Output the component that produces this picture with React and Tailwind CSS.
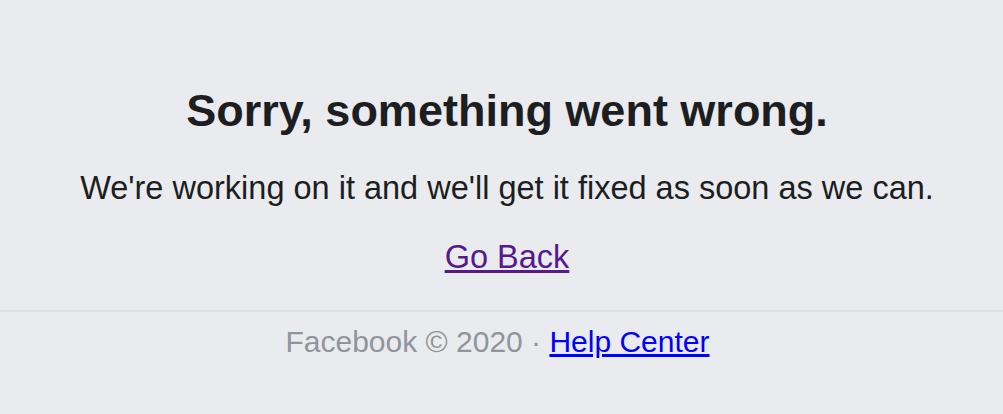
export default function App() {
  return (
    <div className="min-h-screen w-full bg-[#e9ebee] font-['Liberation_Sans',Arial,sans-serif] text-center">
      <div className="pt-[85px] pb-[35px] pl-[11px]">
        <h1 className="text-[45px] leading-[52px] font-bold text-[#1c1e21]">
          Sorry, something went wrong.
        </h1>
        <p className="mt-[33px] text-[32.5px] leading-[36px] text-[#1c1e21]">
          We're working on it and we'll get it fixed as soon as we can.
        </p>
        <p className="mt-[33px] text-[32.5px] leading-[36px]">
          <a href="#" className="text-[#551a8b] underline">Go Back</a>
        </p>
      </div>
      <div className="border-t-2 border-[#dddfe2] pt-[12px] pr-[8px] text-[30px] leading-[36px] text-[#90949c]">
        Facebook © 2020 ·{' '}
        <a href="#" className="text-[#0000ff] underline">Help Center</a>
      </div>
    </div>
  )
}
